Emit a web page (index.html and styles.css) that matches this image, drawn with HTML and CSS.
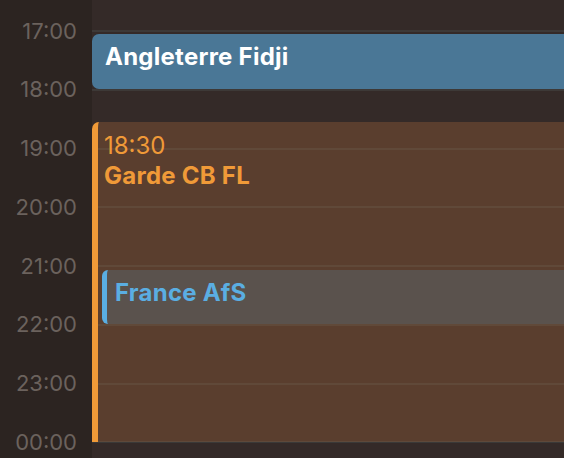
FILE: index.html
```html
<!DOCTYPE html>
<html lang="fr">
<head>
<meta charset="utf-8">
<title>Calendrier</title>
<link rel="stylesheet" href="styles.css">
</head>
<body>
<div class="day">
  <div class="gutter">
    <div class="hour-label">17:00</div>
    <div class="hour-label">18:00</div>
    <div class="hour-label">19:00</div>
    <div class="hour-label">20:00</div>
    <div class="hour-label">21:00</div>
    <div class="hour-label">22:00</div>
    <div class="hour-label">23:00</div>
    <div class="hour-label">00:00</div>
  </div>
  <div class="grid">
    <div class="hour-row"></div>
    <div class="hour-row"></div>
    <div class="hour-row"></div>
    <div class="hour-row"></div>
    <div class="hour-row"></div>
    <div class="hour-row"></div>
    <div class="hour-row"></div>
    <div class="hour-end"></div>

    <div class="event event-blue">
      <div class="event-title">Angleterre Fidji</div>
    </div>
    <div class="event event-orange">
      <div class="event-time">18:30</div>
      <div class="event-title">Garde CB FL</div>
    </div>
    <div class="event event-gray">
      <div class="event-title">France AfS</div>
    </div>
  </div>
</div>
</body>
</html>
```

FILE: styles.css
```css
html, body {
  margin: 0;
  padding: 0;
}
body {
  width: 564px;
  height: 458px;
  overflow: hidden;
  background: #342a28;
  font-family: Inter, "Noto Sans", sans-serif;
}
.day {
  display: flex;
  height: 458px;
}
.gutter {
  width: 92px;
  flex: none;
  background: #2c2421;
  padding-top: 1.6px;
  box-sizing: border-box;
}
.hour-label {
  height: 58.75px;
  line-height: 58.75px;
  text-align: right;
  padding-right: 15px;
  font-size: 22px;
  color: #6b625d;
}
.grid {
  flex: 1;
  position: relative;
  padding-top: 30px;
  overflow: hidden;
}
.hour-row {
  height: 58.75px;
  box-sizing: border-box;
  border-top: 2px solid #3d3937;
}
.hour-end {
  height: 2px;
  background: #3a3938;
}
.event {
  position: absolute;
  right: -12px;
  box-sizing: border-box;
}
.event-title {
  font-weight: 700;
  font-size: 24px;
  line-height: 28px;
  letter-spacing: 0.25px;
}
.event-blue {
  top: 34px;
  height: 55px;
  left: 0;
  background: #4a7796;
  border-radius: 7px 0 0 7px;
  padding: 9px 13px;
  color: #ffffff;
}
.event-orange {
  top: 122px;
  height: 320px;
  left: 0;
  background: rgba(204, 122, 64, 0.25);
  border-left: 6px solid #f09a38;
  border-radius: 7px 0 0 0;
  padding: 9px 6px;
  color: #f09a38;
}
.event-orange .event-title,
.event-time {
  line-height: 30px;
}
.event-time {
  font-size: 24px;
}
.event-gray {
  top: 270px;
  height: 54px;
  left: 10px;
  background: #5a524d;
  border-left: 5px solid #5aaee2;
  border-radius: 6px 0 0 6px;
  padding: 9px 8px;
  color: #5aaee2;
}
```
